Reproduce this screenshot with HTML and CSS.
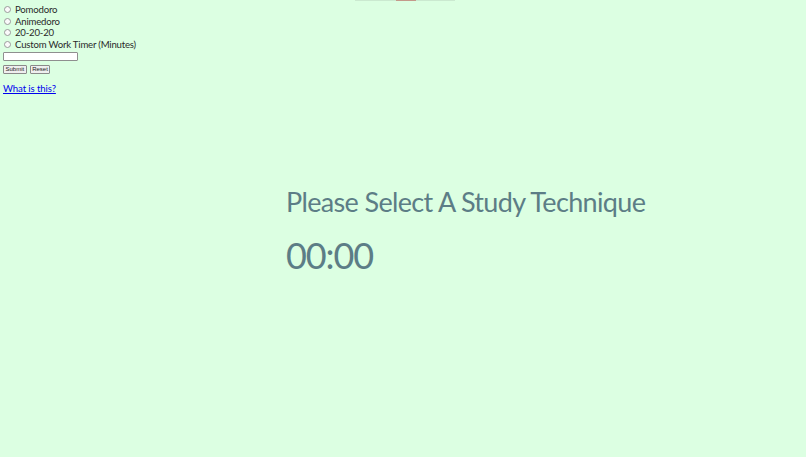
FILE: index.html
```html
<!DOCTYPE html>
<html lang="en">
<head>
<meta charset="utf-8">
<title>Study Timer</title>
<link rel="stylesheet" href="styles.css">
</head>
<body>
<div class="topbar"><span class="topbar-fill"></span></div>
<form class="sidebar">
  <label class="opt"><input type="radio" name="tech" class="radio"> Pomodoro</label>
  <label class="opt"><input type="radio" name="tech" class="radio"> Animedoro</label>
  <label class="opt"><input type="radio" name="tech" class="radio"> 20-20-20</label>
  <label class="opt"><input type="radio" name="tech" class="radio"> Custom Work Timer (Minutes)</label>
  <input type="text" class="custom-input">
  <div class="buttons">
    <button type="button" class="btn">Submit</button>
    <button type="button" class="btn">Reset</button>
  </div>
  <a href="#" class="info-link">What is this?</a>
</form>
<main class="main">
  <h1 class="title">Please Select A Study Technique</h1>
  <div class="timer">00:00</div>
</main>
</body>
</html>
```
FILE: styles.css
```css
html, body {
  margin: 0;
  padding: 0;
  background: #dcffe2;
  height: 100%;
}
body {
  font-family: Lato, "Open Sans", sans-serif;
  position: relative;
}
.topbar {
  position: absolute;
  top: 0;
  left: 355px;
  width: 100px;
  height: 1px;
  background: #cbe9d0;
}
.topbar-fill {
  position: absolute;
  left: 41px;
  width: 20px;
  height: 1px;
  background: #c49a8a;
}
.sidebar {
  display: flex;
  flex-direction: column;
  align-items: flex-start;
  padding: 4px 0 0 3px;
  margin: 0;
}
.opt {
  display: flex;
  align-items: center;
  font-size: 9.6px;
  letter-spacing: -0.2px;
  line-height: 11.5px;
  color: #2a2a2a;
  height: 11.5px;
}
.radio {
  appearance: none;
  -webkit-appearance: none;
  width: 7px;
  height: 7px;
  margin: 0 4px 0 1px;
  border: 1px solid #9a9a9a;
  border-radius: 50%;
  background: #fafafa;
  box-sizing: border-box;
}
.custom-input {
  margin: 2px 0 0 0;
  width: 75px;
  height: 9px;
  box-sizing: border-box;
  border: 1px solid #8f8f8f;
  border-radius: 1px;
  background: #fff;
  padding: 0;
}
.buttons {
  display: flex;
  gap: 3px;
  margin-top: 4px;
}
.btn {
  font-family: "Liberation Sans", Arial, sans-serif;
  font-size: 6px;
  height: 9px;
  padding: 0 1.5px;
  line-height: 7px;
  background: #efefef;
  border: 1px solid #8a8a8a;
  border-radius: 1px;
  color: #222;
  box-sizing: border-box;
}
.info-link {
  margin-top: 9px;
  font-size: 9.6px;
  letter-spacing: -0.1px;
  color: #0000ee;
  text-decoration: underline;
  line-height: 11px;
}
.main {
  padding-left: 286px;
  padding-top: 92px;
  color: #5c7d86;
}
.title {
  margin: 0;
  font-weight: 400;
  font-size: 27px;
  letter-spacing: -0.65px;
  line-height: 32px;
}
.timer {
  margin-top: 15px;
  font-size: 36px;
  font-weight: 400;
  letter-spacing: -1.1px;
  line-height: 44px;
}
```
